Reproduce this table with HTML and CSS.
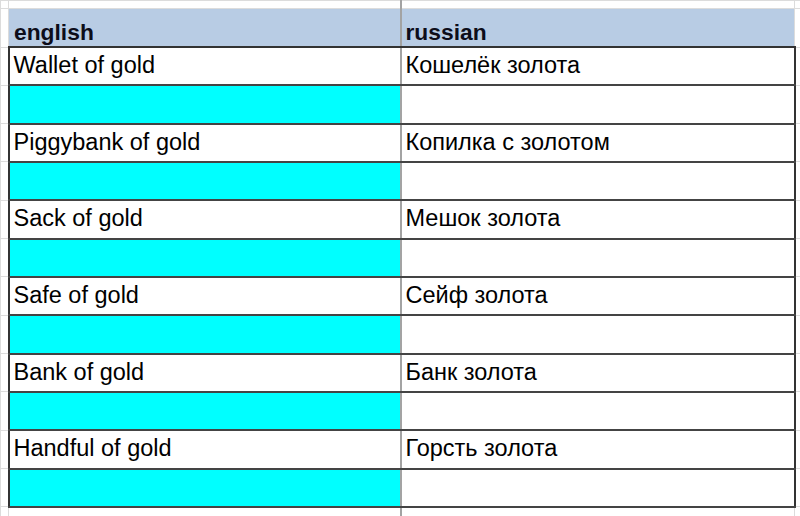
FILE: index.html
```html
<!DOCTYPE html>
<html lang="en">
<head>
<meta charset="utf-8">
<title>english / russian</title>
<link rel="stylesheet" href="styles.css">
</head>
<body>
<table class="sheet">
  <colgroup>
    <col class="col-gutter-left">
    <col class="col-en">
    <col class="col-ru">
    <col class="col-gutter-right">
  </colgroup>
  <tr class="spacer spacer-top"><td></td><td class="en"></td><td></td><td></td></tr>
  <tr class="head"><td class="gut"></td><th class="en">english</th><th class="ru">russian</th><td class="gut"></td></tr>
  <tr class="row"><td class="gut"></td><td class="en">Wallet of gold</td><td class="ru">Кошелёк золота</td><td class="gut"></td></tr>
  <tr class="row blank"><td class="gut"></td><td class="en cyan"></td><td class="ru"></td><td class="gut"></td></tr>
  <tr class="row"><td class="gut"></td><td class="en">Piggybank of gold</td><td class="ru">Копилка с золотом</td><td class="gut"></td></tr>
  <tr class="row blank"><td class="gut"></td><td class="en cyan"></td><td class="ru"></td><td class="gut"></td></tr>
  <tr class="row"><td class="gut"></td><td class="en">Sack of gold</td><td class="ru">Мешок золота</td><td class="gut"></td></tr>
  <tr class="row blank"><td class="gut"></td><td class="en cyan"></td><td class="ru"></td><td class="gut"></td></tr>
  <tr class="row"><td class="gut"></td><td class="en">Safe of gold</td><td class="ru">Сейф золота</td><td class="gut"></td></tr>
  <tr class="row blank"><td class="gut"></td><td class="en cyan"></td><td class="ru"></td><td class="gut"></td></tr>
  <tr class="row"><td class="gut"></td><td class="en">Bank of gold</td><td class="ru">Банк золота</td><td class="gut"></td></tr>
  <tr class="row blank"><td class="gut"></td><td class="en cyan"></td><td class="ru"></td><td class="gut"></td></tr>
  <tr class="row"><td class="gut"></td><td class="en">Handful of gold</td><td class="ru">Горсть золота</td><td class="gut"></td></tr>
  <tr class="row blank"><td class="gut"></td><td class="en cyan"></td><td class="ru"></td><td class="gut"></td></tr>
  <tr class="spacer spacer-bottom"><td></td><td class="en"></td><td></td><td></td></tr>
</table>
</body>
</html>
```

FILE: styles.css
```css
html, body {
  margin: 0;
  padding: 0;
  background: #ffffff;
  overflow: hidden;
}

.sheet {
  border-collapse: collapse;
  table-layout: fixed;
  width: 801px;
  font-family: "Liberation Sans", Arial, sans-serif;
  color: #000;
}

.col-gutter-left { width: 8px; }
.col-en { width: 392px; }
.col-ru { width: 394px; }
.col-gutter-right { width: 7px; }

.sheet td,
.sheet th {
  border: 1px solid #dcdcdc;
  padding: 0;
}

.spacer-top td { height: 7px; }
.spacer-bottom td { height: 10px; }

.sheet .en {
  border-right: 2px solid #a3a3a3;
}

.head th {
  background: #b8cce4;
  height: 37px;
  font-weight: bold;
  font-size: 22.8px;
  text-align: left;
  vertical-align: bottom;
  padding: 0 0 0 5px;
  color: #0d0d1a;
  border-bottom: 2px solid #333;
  border-top: 1px solid #dcdcdc;
}

.head th.ru {
  padding-left: 4px;
}

.row td.en,
.row td.ru {
  height: 35.33px;
  font-size: 23.5px;
  vertical-align: middle;
  padding: 0 0 1px 4px;
  border-top: 2px solid #444;
  border-bottom: 2px solid #444;
  white-space: nowrap;
}

.row td.ru {
  padding-left: 4px;
  border-right: 2px solid #333;
}

.row td.en {
  border-left: 2px solid #333;
  border-right: 2px solid #a3a3a3;
}

.row td.cyan {
  background: #00ffff;
}
```
